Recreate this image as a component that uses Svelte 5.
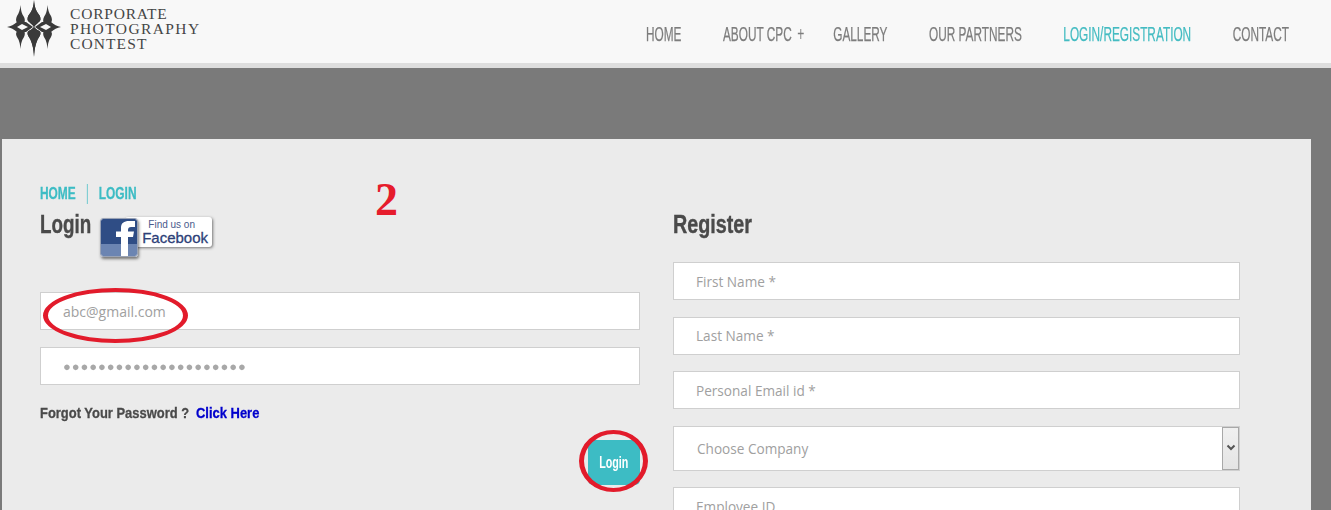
<script>
  const links = [
    { label: "HOME" },
    { label: "ABOUT CPC", plus: true },
    { label: "GALLERY" },
    { label: "OUR PARTNERS" },
    { label: "LOGIN/REGISTRATION", active: true },
    { label: "CONTACT" }
  ];
  const registerFields = ["First Name *", "Last Name *", "Personal Email id *"];
</script>

<div class="page">
  <header class="topbar">
    <a class="logo" href="#home">
      <svg class="mark" viewBox="0 0 66 60" width="66" height="60" aria-hidden="true">
        <g id="mark-half" fill="#3a3a3a">
          <path d="M34 0 C34.5 7 36 11 38.5 14 C40.5 16.5 41 19 40 21 C38 23 36 24 34 27 C32 24 30 23 28 21 C27 19 27.5 16.5 29.5 14 C32 11 33.5 7 34 0Z" />
          <path d="M20.5 5 C21 11 22 14 24 17 C25 19 25 21 24.5 22.5 L17 22.5 C15.5 21 16 18 17 16 C19 13 20 10 20.5 5Z" />
          <path d="M34 57 C33.5 48 32 42 29.5 38 C27.5 35 27 33 28 31.5 C30 30 32 29.5 34 27 C36 29.5 38 30 40 31.5 C41 33 40.5 35 38.5 38 C36 42 34.5 48 34 57Z" />
          <path d="M20.5 49 C20 43 19 40 17 37 C16 35 15.5 33 17 31.5 L24.5 31.5 C25 33 25 35 24 37 C22 40 21 43 20.5 49Z" />
          <path d="M7 27 C11 26.5 14 24.5 17 22 L26 22 L33 27 L26 32 L17 32 C14 29.5 11 27.5 7 27Z" />
          <path fill="#f8f8f8" d="M17 27 L22 24 L28 27 L22 30Z" />
        </g>
        <use href="#mark-half" transform="matrix(-1 0 0 1 68 0)" />
      </svg>
      <span class="wordmark">
        <span>CORPORATE</span>
        <span>PHOTOGRAPHY</span>
        <span>CONTEST</span>
      </span>
    </a>
    <nav class="nav">
      {#each links as link}
        <a href="#nav" class:active={link.active}>{link.label}{#if link.plus}<span class="plus">+</span>{/if}</a>
      {/each}
    </nav>
  </header>

  <main class="panel">
    <section class="col left">
      <div class="crumbs">
        <a href="#home">HOME</a>
        <a href="#login">LOGIN</a>
      </div>
      <div class="title-row">
        <h2>Login</h2>
        <a class="fb" href="#fb">
          <span class="fb-tile">
            <svg viewBox="0 0 36 37" width="36" height="37" aria-hidden="true">
              <path fill="#fff" d="M20 37 V18 H15 V12.5 H20 V9 C20 4 23 2 28 2 H34 V8 H30 C28 8 27 9 27 11 V12.5 H33 L32 18 H27 V37Z" />
            </svg>
          </span>
          <span class="fb-label">
            <small>Find us on</small>
            <b>Facebook</b>
          </span>
        </a>
      </div>

      <div class="field email">abc@gmail.com</div>
      <div class="field password"><span>●●●●●●●●●●●●●●●●●●●●●</span></div>

      <p class="forgot">Forgot Your Password ? <a href="#reset">Click Here</a></p>

      <div class="actions">
        <button type="button"><span>Login</span></button>
      </div>

      <span class="ring ring-email"></span>
      <span class="ring ring-login"></span>
      <span class="step">2</span>
    </section>

    <section class="col right">
      <h2>Register</h2>
      {#each registerFields as label}
        <div class="field">{label}</div>
      {/each}
      <div class="field select">
        <span>Choose Company</span>
        <span class="arrow">
          <svg viewBox="0 0 10 8" width="10" height="8" aria-hidden="true">
            <path d="M1.5 1.5 L5 5 L8.5 1.5" fill="none" stroke="#555" stroke-width="2" />
          </svg>
        </span>
      </div>
      <div class="field">Employee ID</div>
    </section>
  </main>
</div>

<style>
  :global(body) {
    margin: 0;
    background: #7a7a7a;
    overflow: hidden;
  }

  .page {
    height: 510px;
    overflow: hidden;
    font-family: "Open Sans", sans-serif;
  }

  a {
    text-decoration: none;
  }

  .topbar {
    display: flex;
    justify-content: space-between;
    height: 63px;
    background: #f8f8f8;
    border-bottom: 5px solid #dedede;
    padding: 0 42px 0 0;
  }

  .logo {
    display: flex;
    align-items: flex-start;
    color: #454545;
  }

  .mark {
    filter: blur(0.5px);
  }

  .wordmark {
    display: flex;
    flex-direction: column;
    margin: 6px 0 0 4px;
    font: 15.5px/15px "Liberation Serif", serif;
    letter-spacing: 0.8px;
  }

  .wordmark span:nth-child(2) {
    letter-spacing: 1.4px;
  }

  .wordmark span:nth-child(3) {
    letter-spacing: 1.1px;
  }

  /* no condensed face is installed, so the nav is squeezed as a whole */
  .nav {
    display: flex;
    align-items: center;
    gap: 68.5px;
    margin-top: 5px;
    transform: scaleX(0.606);
    transform-origin: right center;
  }

  .nav a {
    position: relative;
    font: 19.5px "Liberation Sans", sans-serif;
    color: #7d7d7d;
    -webkit-text-stroke: 0.25px currentColor;
  }

  .nav a.active {
    color: #45bcc2;
  }

  .plus {
    position: absolute;
    left: calc(100% + 9px);
    top: 0;
    font-size: 20px;
    -webkit-text-stroke: 0;
  }

  .panel {
    display: flex;
    gap: 33px;
    height: 371px;
    margin: 71px 0 0 2px;
    padding: 0 0 0 38px;
    background: #ebebeb;
    box-sizing: border-box;
    width: 1309px;
  }

  .col {
    position: relative;
    display: flex;
    flex-direction: column;
  }

  .left {
    width: 600px;
    padding-top: 45px;
  }

  .right {
    width: 567px;
    padding-top: 70px;
  }

  .crumbs {
    display: flex;
    font: bold 17px/20px "Liberation Sans", sans-serif;
    transform: scaleX(0.7);
    transform-origin: left center;
    -webkit-text-stroke: 0.3px #3dbcc4;
  }

  .crumbs a {
    color: #3dbcc4;
  }

  .crumbs a:first-child {
    padding-right: 16px;
    margin-right: 16px;
    border-right: 1px solid #3dbcc4;
  }

  h2 {
    margin: 0;
    font: bold 26.5px/30px "Liberation Sans", sans-serif;
    color: #4a4a4a;
    transform: scaleX(0.745);
    transform-origin: left center;
    -webkit-text-stroke: 0.4px #4a4a4a;
  }

  .title-row {
    display: flex;
    align-items: flex-start;
    height: 85px;
    margin-top: 3px;
  }

  .title-row h2 {
    width: 60px;
    margin-top: 2px;
    transform: scaleX(0.71);
  }

  .fb {
    position: relative;
    display: flex;
    flex: none;
    margin-top: 10px;
    height: 42px;
  }

  .fb-tile {
    z-index: 1;
    width: 36px;
    height: 37px;
    overflow: hidden;
    margin-top: 1px;
    border: 1px solid #f4f6fa;
    outline: 1px solid #9aa3b5;
    outline-offset: -1px;
    border-radius: 3px;
    background: linear-gradient(#2f4d85 0 68%, #6c85b2 68%);
    box-shadow: 1px 2px 3px rgba(0, 0, 0, 0.5);
  }

  .fb-label {
    display: flex;
    flex-direction: column;
    align-items: flex-end;
    flex: none;
    box-sizing: border-box;
    width: 87px;
    height: 30px;
    margin-left: -13px;
    padding: 2px 4px 0 0;
    background: #fff;
    border-radius: 3px;
    box-shadow: 1px 1px 3px rgba(0, 0, 0, 0.5);
    color: #2d3f78;
    font-family: "Liberation Sans", sans-serif;
  }

  .fb-label small {
    margin-right: 13px;
    font-size: 10px;
    line-height: 11px;
    color: #4a5a8c;
  }

  .fb-label b {
    font-size: 15px;
    font-weight: 400;
    line-height: 16px;
    -webkit-text-stroke: 0.3px #2d3f78;
  }

  .field {
    display: flex;
    flex: none;
    align-items: center;
    justify-content: space-between;
    box-sizing: border-box;
    height: 38px;
    padding-left: 22px;
    margin-bottom: 17px;
    background: #fff;
    border: 1px solid #cfcfcf;
    font-size: 14px;
    color: #a0a0a0;
  }

  .right h2 {
    margin-bottom: 23px;
  }

  .right .field {
    margin-bottom: 16.5px;
    font-size: 13.6px;
  }

  .password {
    font-size: 13px;
    letter-spacing: 0.9px;
    color: #a8a8a8;
    margin-bottom: 18px;
  }

  .password span {
    transform: scaleX(1.001);
  }

  .right .select {
    height: 45px;
    padding: 0 0 0 23px;
  }

  .arrow {
    display: flex;
    align-items: center;
    justify-content: center;
    box-sizing: border-box;
    width: 17px;
    height: 100%;
    background: linear-gradient(#f0f0f0, #e4e4e4);
    border: 1px solid #a8a8a8;
  }

  .forgot {
    margin: 0;
    font: bold 15.5px/20px "Liberation Sans", sans-serif;
    color: #4a4a4a;
    transform: scaleX(0.835);
    transform-origin: left center;
    -webkit-text-stroke: 0.3px currentColor;
  }

  .forgot a {
    margin-left: 4px;
    color: #0000cc;
  }

  .actions {
    display: flex;
    justify-content: flex-end;
    margin-top: 17px;
  }

  button {
    width: 52px;
    height: 45px;
    padding: 0;
    border: 0;
    border-radius: 5px;
    background: #3dbcc4;
    color: #fff;
    font: bold 16px "Liberation Sans", sans-serif;
  }

  button span {
    display: inline-block;
    transform: scaleX(0.67);
  }

  .ring {
    position: absolute;
    box-sizing: border-box;
    border: 4px solid #e21b2b;
    border-radius: 50%;
  }

  .ring-email {
    left: 3px;
    top: 149px;
    width: 145px;
    height: 55px;
    border-width: 4px 5px;
  }

  .ring-login {
    left: 539px;
    top: 291px;
    width: 69px;
    height: 62px;
    border-width: 4px 5px;
  }

  .step {
    position: absolute;
    left: 335px;
    top: 34px;
    font: bold 46px/54px "Liberation Serif", serif;
    color: #e61c2c;
  }
</style>
